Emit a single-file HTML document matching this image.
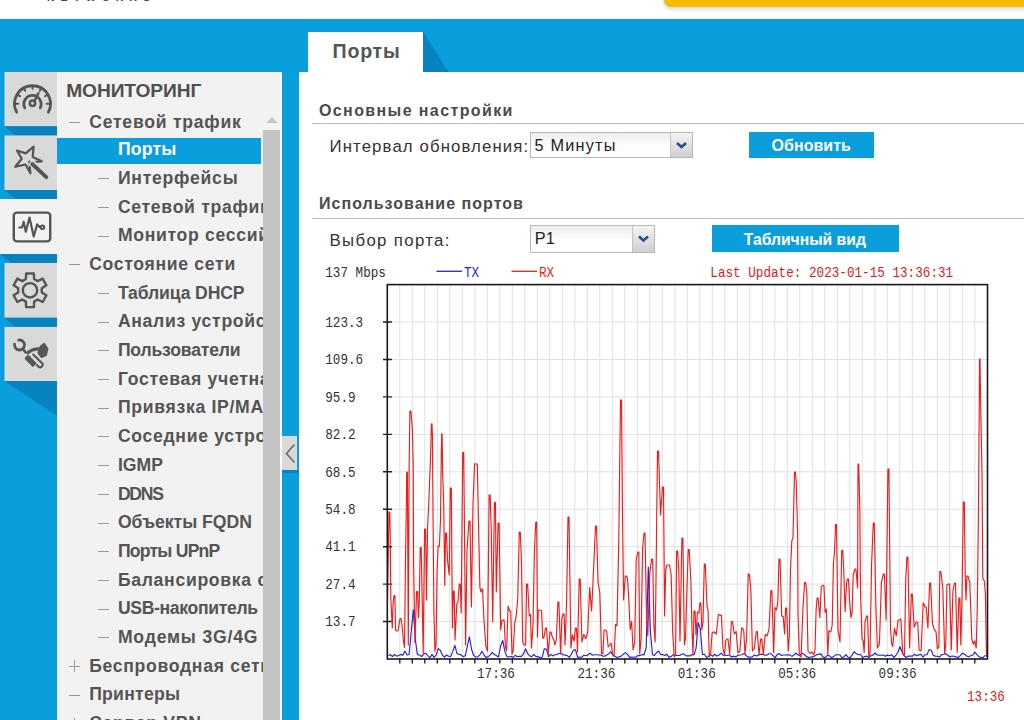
<!DOCTYPE html>
<html><head><meta charset="utf-8">
<style>
html,body{margin:0;padding:0;}
body{width:1024px;height:720px;overflow:hidden;position:relative;background:#0a9edc;font-family:"Liberation Sans",sans-serif;}
.abs{position:absolute;}
.t{position:absolute;white-space:nowrap;}
.sel{position:absolute;border:1px solid #b8b8b8;background:linear-gradient(#ececec,#fff 55%);box-sizing:border-box;}
.selbtn{position:absolute;top:0;right:0;width:21px;height:24px;background:linear-gradient(#f4f4f4,#cfcfcf);border-left:1px solid #c4c4c4;}
.selbtn svg{display:block}
.btn{position:absolute;background:#0a9edc;}

</style></head><body>
<div class="abs" style="left:0;top:0;width:1024px;height:19px;background:#fff"></div>
<div class="abs" style="left:47px;top:-7.8px;font-size:10.5px;line-height:11px;letter-spacing:5.95px;color:#444;font-weight:bold">NETWORKS</div>
<div class="abs" style="left:664px;top:-20px;width:380px;height:27px;background:#f5bd00;border-radius:7px;box-shadow:0 2px 4px rgba(0,0,0,0.18)"></div>
<svg class="abs" style="left:0;top:0" width="60" height="440" viewBox="0 0 60 440">
 <!-- square 1 -->
 <rect x="4.5" y="72" width="52.5" height="54.3" fill="#d9d9d9"/>
 <polygon points="4.5,126.3 57,126.3 57,135 15,135" fill="#0682bf"/>
 <!-- square 2 -->
 <rect x="4.5" y="135.5" width="52.5" height="54.5" fill="#d9d9d9"/>
 <polygon points="4.5,190 57,190 57,199 15.5,199" fill="#0682bf"/>
 <!-- active -->
 <rect x="0" y="199" width="57" height="55" fill="#f2f2f2"/>
 <polygon points="0,254 57,254 57,262.8 11,262.8" fill="#0682bf"/>
 <!-- square 4 -->
 <rect x="4.5" y="263" width="52.5" height="54.8" fill="#d9d9d9"/>
 <polygon points="4.5,317.8 57,317.8 57,326.6 15,326.6" fill="#0682bf"/>
 <!-- square 5 -->
 <rect x="4.5" y="327" width="52.5" height="54" fill="#d9d9d9"/>
 <polygon points="4.5,381 57,381 57,416" fill="#0682bf"/>
 <g fill="none" stroke="#555" stroke-width="2.5" stroke-linecap="round" stroke-linejoin="round">
  <!-- speedometer -->
  <path d="M16.6 112.2 A18 18 0 1 1 48.4 112.2" stroke-width="2.8"/>
  <path d="M16 103.8 L18.3 103.8 M17.9 95 L19.9 96.2 M24 88.8 L25.2 90.8 M32.5 86.5 L32.5 88.8 M41 88.8 L39.8 90.8 M47.1 95 L45.1 96.2 M49 103.8 L46.7 103.8" stroke-width="2"/>
  <path d="M24.8 107.8 A8.6 8.6 0 1 1 40.2 107.8" stroke-width="2.8"/>
  <circle cx="32.5" cy="103.3" r="2.7"/>
  <path d="M34.6 100.6 L38.4 93.2"/>
  <!-- magic wand star -->
  <path stroke-width="2.2" d="M29.4 161.6 L30.4 173.3 L25.5 164.5 L15.25 166.8 L21.7 158.7 L17 150.5 L25.75 153.4 L33.6 146.7 L32.75 156.9 L41.8 161.3 L34 162"/>
  <!-- monitor -->
  <rect x="13.8" y="212.6" width="36.4" height="28.8" rx="3" stroke-width="2.4"/>
  <path d="M19.2 227.5 L22.1 227.3 L23.7 221.7 L25.8 231.7 L29.5 217.5 L33.7 236.5 L37.2 224.4 L39.6 227" stroke-width="2.2"/>
  <circle cx="42.5" cy="227.3" r="1.8" stroke-width="2"/>
  <!-- gear -->
  <path d="M25.9 279.0 L26.1 273.5 L33.9 273.5 L34.1 279.0 L37.7 281.1 L42.6 278.6 L46.4 285.3 L41.8 288.2 L41.8 292.4 L46.4 295.3 L42.6 302.0 L37.7 299.5 L34.1 301.6 L33.9 307.1 L26.1 307.1 L25.9 301.6 L22.3 299.5 L17.4 302.0 L13.6 295.3 L18.2 292.4 L18.2 288.2 L13.6 285.3 L17.4 278.6 L22.3 281.1Z" stroke-width="2.4"/>
  <circle cx="30" cy="290.3" r="7.2" stroke-width="2.4"/>
  <!-- tools: wrench -->
  <path d="M14.6 344.1 A5 5 0 1 0 18.6 340.1" stroke-width="2.8"/>
  <path d="M23.6 349.8 L25.8 352.5" stroke-width="2.6"/>
  <path d="M33.2 354.6 L42.2 363.2 A2.6 2.6 0 0 1 38.6 366.8 L36.8 365" stroke-width="2.1"/>
 </g>
 <g fill="#555" stroke="#555" stroke-linejoin="round" stroke-linecap="round">
  <path d="M30.5 161.8 L46.5 177.3" stroke-width="7" fill="none" stroke="#d9d9d9" stroke-linecap="butt"/>
  <path d="M32.2 164 L46.3 177.2" stroke-width="3.8" fill="none"/>
  <!-- screwdriver blob + shaft + grip -->
  <path d="M40.5 346.5 L44.2 343.6 L47.6 348.6 L46.2 355 L41.5 357.2 L38.2 353 Z" stroke-width="1.6"/>
  <path d="M27.8 352.8 Q33 348.5 40.5 349" stroke-width="3.2" fill="none"/>
  <path d="M25.8 358.4 L28.2 356 L35.2 363.2 L32.8 365.6 Z" stroke-width="2.2"/>
 </g>
</svg>

<div class="abs" style="left:57px;top:72px;width:223px;height:648px;background:#f2f2f2"></div>
<div class="abs" style="left:57px;top:72px;width:205.7px;height:648px;overflow:hidden">
<div class="t" style="left:9.20px;top:8.12px;font-size:19.2px;line-height:21.45px;font-weight:bold;color:#505050;letter-spacing:-0.1px;">МОНИТОРИНГ</div>
<div class="abs" style="left:11.75px;top:50px;width:11.5px;height:1px;background:#999999"></div>
<div class="t" style="left:32.20px;top:41.07px;font-size:17.6px;line-height:19.66px;font-weight:bold;color:#545454;letter-spacing:0.758px;">Сетевой трафик</div>
<div class="abs" style="left:0;top:66px;width:203.7px;height:25.8px;background:#0a9edc"></div>
<div class="abs" style="left:40.50px;top:78px;width:11.5px;height:1px;background:#3d8fb8"></div>
<div class="t" style="left:60.90px;top:68.35px;font-size:17.6px;line-height:19.66px;font-weight:bold;color:#fff;letter-spacing:0.2px;">Порты</div>
<div class="abs" style="left:40.50px;top:106px;width:11.5px;height:1px;background:#999999"></div>
<div class="t" style="left:60.90px;top:97.03px;font-size:17.6px;line-height:19.66px;font-weight:bold;color:#545454;letter-spacing:0.756px;">Интерфейсы</div>
<div class="abs" style="left:40.50px;top:135px;width:11.5px;height:1px;background:#999999"></div>
<div class="t" style="left:60.90px;top:125.71px;font-size:17.6px;line-height:19.66px;font-weight:bold;color:#545454;letter-spacing:0.7px;">Сетевой трафик по хостам</div>
<div class="abs" style="left:40.50px;top:164px;width:11.5px;height:1px;background:#999999"></div>
<div class="t" style="left:60.90px;top:154.39px;font-size:17.6px;line-height:19.66px;font-weight:bold;color:#545454;letter-spacing:0.7px;">Монитор сессий</div>
<div class="abs" style="left:11.75px;top:192px;width:11.5px;height:1px;background:#999999"></div>
<div class="t" style="left:32.20px;top:183.07px;font-size:17.6px;line-height:19.66px;font-weight:bold;color:#545454;letter-spacing:0.689px;">Состояние сети</div>
<div class="abs" style="left:40.50px;top:221px;width:11.5px;height:1px;background:#999999"></div>
<div class="t" style="left:60.90px;top:211.75px;font-size:17.6px;line-height:19.66px;font-weight:bold;color:#545454;letter-spacing:-0.123px;">Таблица DHCP</div>
<div class="abs" style="left:40.50px;top:250px;width:11.5px;height:1px;background:#999999"></div>
<div class="t" style="left:60.90px;top:240.43px;font-size:17.6px;line-height:19.66px;font-weight:bold;color:#545454;letter-spacing:0.7px;">Анализ устройств</div>
<div class="abs" style="left:40.50px;top:278px;width:11.5px;height:1px;background:#999999"></div>
<div class="t" style="left:60.90px;top:269.11px;font-size:17.6px;line-height:19.66px;font-weight:bold;color:#545454;letter-spacing:-0.186px;">Пользователи</div>
<div class="abs" style="left:40.50px;top:307px;width:11.5px;height:1px;background:#999999"></div>
<div class="t" style="left:60.90px;top:297.79px;font-size:17.6px;line-height:19.66px;font-weight:bold;color:#545454;letter-spacing:0.7px;">Гостевая учетная запись</div>
<div class="abs" style="left:40.50px;top:336px;width:11.5px;height:1px;background:#999999"></div>
<div class="t" style="left:60.90px;top:326.47px;font-size:17.6px;line-height:19.66px;font-weight:bold;color:#545454;letter-spacing:0.7px;">Привязка IP/MAC</div>
<div class="abs" style="left:40.50px;top:364px;width:11.5px;height:1px;background:#999999"></div>
<div class="t" style="left:60.90px;top:355.15px;font-size:17.6px;line-height:19.66px;font-weight:bold;color:#545454;letter-spacing:0.7px;">Соседние устройства</div>
<div class="abs" style="left:40.50px;top:393px;width:11.5px;height:1px;background:#999999"></div>
<div class="t" style="left:60.90px;top:383.83px;font-size:17.6px;line-height:19.66px;font-weight:bold;color:#545454;letter-spacing:0.017px;">IGMP</div>
<div class="abs" style="left:40.50px;top:422px;width:11.5px;height:1px;background:#999999"></div>
<div class="t" style="left:60.90px;top:412.51px;font-size:17.6px;line-height:19.66px;font-weight:bold;color:#545454;letter-spacing:-1.283px;">DDNS</div>
<div class="abs" style="left:40.50px;top:451px;width:11.5px;height:1px;background:#999999"></div>
<div class="t" style="left:60.90px;top:441.19px;font-size:17.6px;line-height:19.66px;font-weight:bold;color:#545454;letter-spacing:-0.014px;">Объекты FQDN</div>
<div class="abs" style="left:40.50px;top:479px;width:11.5px;height:1px;background:#999999"></div>
<div class="t" style="left:60.90px;top:469.87px;font-size:17.6px;line-height:19.66px;font-weight:bold;color:#545454;letter-spacing:-0.772px;">Порты UPnP</div>
<div class="abs" style="left:40.50px;top:508px;width:11.5px;height:1px;background:#999999"></div>
<div class="t" style="left:60.90px;top:498.55px;font-size:17.6px;line-height:19.66px;font-weight:bold;color:#545454;letter-spacing:0.7px;">Балансировка сети</div>
<div class="abs" style="left:40.50px;top:537px;width:11.5px;height:1px;background:#999999"></div>
<div class="t" style="left:60.90px;top:527.23px;font-size:17.6px;line-height:19.66px;font-weight:bold;color:#545454;letter-spacing:-0.334px;">USB-накопитель</div>
<div class="abs" style="left:40.50px;top:565px;width:11.5px;height:1px;background:#999999"></div>
<div class="t" style="left:60.90px;top:555.91px;font-size:17.6px;line-height:19.66px;font-weight:bold;color:#545454;letter-spacing:0.814px;">Модемы 3G/4G</div>
<div class="abs" style="left:11.75px;top:594px;width:11.5px;height:1px;background:#999999"></div>
<div class="abs" style="left:17px;top:588.22px;width:1px;height:11.5px;background:#999999"></div>
<div class="t" style="left:32.20px;top:584.59px;font-size:17.6px;line-height:19.66px;font-weight:bold;color:#545454;letter-spacing:0.7px;">Беспроводная сеть</div>
<div class="abs" style="left:11.75px;top:623px;width:11.5px;height:1px;background:#999999"></div>
<div class="t" style="left:32.20px;top:613.27px;font-size:17.6px;line-height:19.66px;font-weight:bold;color:#545454;letter-spacing:0.265px;">Принтеры</div>
<div class="abs" style="left:11.75px;top:651px;width:11.5px;height:1px;background:#999999"></div>
<div class="abs" style="left:17px;top:645.58px;width:1px;height:11.5px;background:#999999"></div>
<div class="t" style="left:32.20px;top:641.95px;font-size:17.6px;line-height:19.66px;font-weight:bold;color:#545454;letter-spacing:0.7px;">Сервер VPN</div>

</div>
<div class="abs" style="left:262.7px;top:130px;width:17.3px;height:590px;background:#c3c3c3"></div>
<div class="abs" style="left:265.5px;top:116.5px;width:0;height:0;border-left:6px solid transparent;border-right:6px solid transparent;border-bottom:6.5px solid #c6c6c6"></div>
<div class="abs" style="left:280px;top:72px;width:2px;height:648px;background:#f4fbfe"></div>
<div class="abs" style="left:282px;top:436.3px;width:14.5px;height:34px;background:#d9d9d9"></div>
<svg class="abs" style="left:282px;top:436px" width="15" height="35"><path d="M12.5 8.5 L4.5 17.5 L12.5 26.5" fill="none" stroke="#6a6a6a" stroke-width="1.6"/></svg>
<div class="abs" style="left:282px;top:470.3px;width:16.7px;height:3px;background:#0682bf"></div>
<div class="abs" style="left:298.7px;top:72px;width:726px;height:648px;background:#fff"></div>
<div class="abs" style="left:308px;top:31.7px;width:115px;height:41px;background:#fff"></div>
<div class="abs" style="left:423px;top:31.7px;width:25.5px;height:40.3px;background:#0682bf;clip-path:polygon(0 0,0 100%,100% 100%)"></div>
<div class="t" style="left:332.60px;top:41.06px;font-size:19.6px;line-height:21.89px;font-weight:bold;color:#555555;letter-spacing:0.75px;">Порты</div>
<div class="t" style="left:319.00px;top:102.12px;font-size:16px;line-height:17.87px;font-weight:bold;color:#4a4a4a;letter-spacing:1.39px;">Основные настройки</div>
<div class="abs" style="left:312px;top:123.3px;width:712px;height:1.2px;background:#bcbcbc"></div>
<div class="t" style="left:329.50px;top:138.30px;font-size:16.8px;line-height:18.77px;font-weight:normal;color:#333;letter-spacing:1.11px;">Интервал обновления:</div>
<div class="sel" style="left:530px;top:132.4px;width:163px;height:26px"><div class="selbtn"><svg width="21" height="24" viewBox="0 0 21 24"><path d="M6 10 L10.5 14 L15 10" fill="none" stroke="#2b4c86" stroke-width="2.6"/></svg></div></div>
<div class="t" style="left:534.50px;top:136.25px;font-size:16.3px;line-height:18.21px;font-weight:normal;color:#222;letter-spacing:1.2px;">5 Минуты</div>
<div class="btn" style="left:749px;top:132.2px;width:124.7px;height:26.3px"></div>
<div class="t" style="left:771.50px;top:136.52px;font-size:16px;line-height:17.87px;font-weight:bold;color:#fff;letter-spacing:0.05px;">Обновить</div>
<div class="t" style="left:319.00px;top:195.12px;font-size:16px;line-height:17.87px;font-weight:bold;color:#4a4a4a;letter-spacing:1.03px;">Использование портов</div>
<div class="abs" style="left:312px;top:217.6px;width:712px;height:1.2px;background:#bcbcbc"></div>
<div class="t" style="left:329.50px;top:231.50px;font-size:16.8px;line-height:18.77px;font-weight:normal;color:#333;letter-spacing:1.35px;">Выбор порта:</div>
<div class="sel" style="left:530px;top:225.2px;width:124.5px;height:27.4px"><div class="selbtn" style="height:25.4px"><svg width="21" height="25" viewBox="0 0 21 25"><path d="M6 10.5 L10.5 14.5 L15 10.5" fill="none" stroke="#2b4c86" stroke-width="2.6"/></svg></div></div>
<div class="t" style="left:534.80px;top:228.75px;font-size:16.3px;line-height:18.21px;font-weight:normal;color:#222;letter-spacing:0.0px;">P1</div>
<div class="btn" style="left:711.7px;top:225.2px;width:187.5px;height:27px"></div>
<div class="t" style="left:743.80px;top:230.69px;font-size:15.7px;line-height:17.54px;font-weight:bold;color:#fff;letter-spacing:0px;">Табличный вид</div>

<svg class="abs" style="left:0;top:0" width="1024" height="720" viewBox="0 0 1024 720">
<path d="M399.8 284.6V659.0M412.3 284.6V659.0M424.8 284.6V659.0M437.3 284.6V659.0M449.8 284.6V659.0M462.3 284.6V659.0M474.8 284.6V659.0M487.3 284.6V659.0M499.8 284.6V659.0M512.3 284.6V659.0M524.8 284.6V659.0M537.3 284.6V659.0M549.8 284.6V659.0M562.3 284.6V659.0M574.8 284.6V659.0M587.3 284.6V659.0M599.8 284.6V659.0M612.3 284.6V659.0M624.8 284.6V659.0M637.3 284.6V659.0M649.8 284.6V659.0M662.3 284.6V659.0M674.8 284.6V659.0M687.3 284.6V659.0M699.8 284.6V659.0M712.3 284.6V659.0M724.8 284.6V659.0M737.3 284.6V659.0M749.8 284.6V659.0M762.3 284.6V659.0M774.8 284.6V659.0M787.3 284.6V659.0M799.8 284.6V659.0M812.3 284.6V659.0M824.8 284.6V659.0M837.3 284.6V659.0M849.8 284.6V659.0M862.3 284.6V659.0M874.8 284.6V659.0M887.3 284.6V659.0M899.8 284.6V659.0M912.3 284.6V659.0M924.8 284.6V659.0M937.3 284.6V659.0M949.8 284.6V659.0M962.3 284.6V659.0M974.8 284.6V659.0M387.3 322.04H987.5M387.3 359.48H987.5M387.3 396.92H987.5M387.3 434.36H987.5M387.3 471.80H987.5M387.3 509.24H987.5M387.3 546.68H987.5M387.3 584.12H987.5M387.3 621.56H987.5" stroke="#e0e0e0" stroke-width="1" fill="none"/>
<path d="M383 322.04H392M383 359.48H392M383 396.92H392M383 434.36H392M383 471.80H392M383 509.24H392M383 546.68H392M383 584.12H392M383 621.56H392M399.8 659.0V663.5M412.3 659.0V663.5M424.8 659.0V663.5M437.3 659.0V663.5M449.8 659.0V663.5M462.3 659.0V663.5M474.8 659.0V663.5M487.3 659.0V663.5M499.8 659.0V663.5M512.3 659.0V663.5M524.8 659.0V663.5M537.3 659.0V663.5M549.8 659.0V663.5M562.3 659.0V663.5M574.8 659.0V663.5M587.3 659.0V663.5M599.8 659.0V663.5M612.3 659.0V663.5M624.8 659.0V663.5M637.3 659.0V663.5M649.8 659.0V663.5M662.3 659.0V663.5M674.8 659.0V663.5M687.3 659.0V663.5M699.8 659.0V663.5M712.3 659.0V663.5M724.8 659.0V663.5M737.3 659.0V663.5M749.8 659.0V663.5M762.3 659.0V663.5M774.8 659.0V663.5M787.3 659.0V663.5M799.8 659.0V663.5M812.3 659.0V663.5M824.8 659.0V663.5M837.3 659.0V663.5M849.8 659.0V663.5M862.3 659.0V663.5M874.8 659.0V663.5M887.3 659.0V663.5M899.8 659.0V663.5M912.3 659.0V663.5M924.8 659.0V663.5M937.3 659.0V663.5M949.8 659.0V663.5M962.3 659.0V663.5M974.8 659.0V663.5" stroke="#222" stroke-width="1.4" fill="none"/>
<polyline points="388.3,655.4 390.4,654.7 392.5,656.5 394.5,654.5 396.6,656.1 398.7,655.5 400.8,654.4 402.9,655.3 404.9,651.1 407.0,655.0 409.1,654.5 411.2,632.0 413.3,609.7 415.3,639.4 417.4,654.6 419.5,655.0 421.6,656.5 423.7,654.1 425.7,653.2 427.8,655.6 429.9,657.7 432.0,654.4 434.1,657.3 436.1,655.2 438.2,648.6 440.3,650.3 442.4,655.3 444.5,657.1 446.5,654.9 448.6,656.3 450.7,656.5 452.8,651.4 454.9,645.4 456.9,653.4 459.0,654.4 461.1,654.9 463.2,656.6 465.3,655.7 467.3,646.4 469.4,636.9 471.5,649.0 473.6,655.3 475.7,657.1 477.7,656.7 479.8,655.1 481.9,651.2 484.0,655.0 486.1,657.4 488.1,656.8 490.2,654.8 492.3,652.5 494.4,654.6 496.5,655.7 498.5,656.9 500.6,646.0 502.7,640.4 504.8,651.2 506.9,656.6 508.9,657.0 511.0,656.3 513.1,657.4 515.2,655.3 517.3,656.7 519.3,656.3 521.4,656.3 523.5,653.8 525.6,648.8 527.7,653.7 529.7,655.9 531.8,656.6 533.9,654.4 536.0,656.7 538.1,656.5 540.1,657.8 542.2,657.2 544.3,648.7 546.4,649.0 548.5,656.6 550.5,654.3 552.6,655.9 554.7,654.8 556.8,654.6 558.9,653.5 560.9,653.3 563.0,654.7 565.1,655.1 567.2,655.6 569.3,657.3 571.3,654.5 573.4,650.0 575.5,649.7 577.6,657.4 579.7,657.1 581.7,657.3 583.8,655.2 585.9,655.7 588.0,655.0 590.1,653.1 592.1,655.1 594.2,654.7 596.3,654.8 598.4,655.0 600.5,655.0 602.5,655.9 604.6,656.3 606.7,655.1 608.8,653.7 610.9,651.8 612.9,655.2 615.0,656.2 617.1,657.6 619.2,656.7 621.3,656.1 623.3,654.2 625.4,652.6 627.5,654.4 629.6,657.4 631.7,657.0 633.7,657.3 635.8,657.1 637.9,655.6 640.0,655.6 642.1,654.6 644.1,654.9 646.2,647.5 648.3,567.0 650.4,632.0 652.5,654.8 654.5,655.4 656.6,652.5 658.7,651.1 660.8,654.7 662.9,654.6 664.9,655.5 667.0,654.3 669.1,657.3 671.2,656.4 673.3,654.7 675.3,655.1 677.4,655.5 679.5,655.5 681.6,654.4 683.7,653.7 685.7,655.7 687.8,655.9 689.9,655.9 692.0,654.5 694.1,654.6 696.1,648.1 698.2,622.6 700.3,629.0 702.4,654.5 704.5,654.3 706.5,657.6 708.6,656.1 710.7,654.7 712.8,656.2 714.9,654.3 716.9,656.1 719.0,654.9 721.1,653.2 723.2,655.3 725.3,655.1 727.3,655.5 729.4,654.8 731.5,657.0 733.6,656.1 735.7,657.0 737.7,655.4 739.8,655.0 741.9,654.7 744.0,653.4 746.1,655.5 748.1,657.1 750.2,657.1 752.3,656.9 754.4,655.0 756.5,656.1 758.5,655.0 760.6,654.3 762.7,654.3 764.8,655.2 766.9,655.1 768.9,653.7 771.0,653.7 773.1,655.8 775.2,657.6 777.3,654.4 779.3,653.6 781.4,655.5 783.5,655.0 785.6,655.0 787.7,654.9 789.7,654.9 791.8,656.4 793.9,655.1 796.0,653.0 798.1,655.1 800.1,654.9 802.2,653.2 804.3,654.5 806.4,656.6 808.5,657.5 810.5,657.0 812.6,656.9 814.7,655.9 816.8,654.8 818.9,654.1 820.9,653.9 823.0,657.1 825.1,657.7 827.2,655.6 829.3,655.6 831.3,657.6 833.4,656.8 835.5,654.8 837.6,654.7 839.7,654.7 841.7,657.5 843.8,657.1 845.9,654.7 848.0,657.2 850.1,657.7 852.1,655.1 854.2,651.6 856.3,653.8 858.4,654.7 860.5,654.3 862.5,657.7 864.6,656.5 866.7,656.1 868.8,657.6 870.9,655.8 872.9,655.1 875.0,653.0 877.1,655.0 879.2,655.1 881.3,655.3 883.3,655.1 885.4,656.3 887.5,655.1 889.6,655.7 891.7,654.7 893.7,657.5 895.8,655.5 897.9,652.2 900.0,646.7 902.1,652.1 904.1,655.7 906.2,657.5 908.3,656.0 910.4,656.1 912.5,656.1 914.5,654.3 916.6,655.8 918.7,654.9 920.8,654.2 922.9,657.1 924.9,654.8 927.0,654.7 929.1,649.6 931.2,650.3 933.3,655.4 935.3,656.1 937.4,656.2 939.5,657.0 941.6,654.6 943.7,654.3 945.7,653.7 947.8,655.2 949.9,657.0 952.0,656.0 954.1,656.2 956.1,656.9 958.2,657.5 960.3,655.6 962.4,653.2 964.5,654.2 966.5,656.0 968.6,656.7 970.7,655.8 972.8,655.0 974.9,652.2 976.9,654.6 979.0,656.7 981.1,657.4 983.2,657.6 985.3,655.1" fill="none" stroke="#2222e8" stroke-width="1.15" stroke-linejoin="round"/>
<polyline points="387.5,600.0 389.0,512.0 389.8,512.0 390.3,541.0 390.8,599.0 392.3,628.0 393.0,605.0 394.0,595.5 394.9,595.5 395.5,630.0 396.8,631.0 398.0,631.0 400.0,618.5 401.0,618.5 402.0,625.0 403.5,642.0 404.5,647.5 405.5,559.0 406.2,516.5 406.7,472.0 407.4,472.0 408.3,645.0 409.1,470.0 409.9,411.0 410.9,411.0 412.4,429.0 413.2,463.9 413.6,563.0 414.9,642.5 416.6,591.5 417.6,591.5 418.5,617.7 419.3,600.0 420.2,547.5 421.2,547.5 423.2,654.0 424.6,529.0 425.6,529.0 426.5,600.0 427.6,526.5 428.8,503.0 430.6,455.6 431.4,423.9 432.0,423.9 432.4,435.6 433.0,511.0 433.9,610.4 434.9,651.3 436.0,645.4 437.1,570.7 438.2,546.0 439.4,546.1 440.5,520.0 441.3,453.3 441.7,433.9 442.1,433.9 442.6,472.0 443.7,503.8 444.8,585.6 445.6,533.0 446.5,533.0 447.5,560.0 449.2,575.0 450.3,488.0 451.3,488.0 452.4,628.0 453.3,591.0 454.2,591.0 455.0,640.0 456.8,604.0 458.0,601.5 459.2,584.0 460.2,584.0 461.2,613.0 462.7,452.5 463.7,452.5 465.6,645.0 467.0,550.0 469.0,521.0 470.0,521.0 471.4,607.0 473.0,504.0 474.6,463.8 476.3,464.0 477.3,464.0 478.7,533.0 479.9,587.5 481.0,592.0 482.5,588.7 484.0,620.0 485.8,646.0 487.5,651.0 489.1,495.0 490.1,495.0 491.2,528.0 492.7,622.0 494.4,502.6 495.4,502.6 496.3,592.0 498.1,523.0 499.1,523.0 500.7,630.0 501.9,620.8 503.1,620.0 504.1,620.0 505.4,645.9 506.6,651.0 508.1,606.0 509.7,611.0 510.7,611.0 512.0,654.1 513.2,651.0 514.7,623.2 516.1,617.0 517.7,599.5 519.3,532.0 520.3,532.0 521.5,562.0 522.7,642.0 524.2,645.2 525.6,645.0 526.6,584.0 527.6,584.0 529.3,616.0 530.4,614.5 531.5,648.0 533.0,624.5 534.4,551.0 535.8,522.0 536.7,522.0 537.5,637.0 538.3,610.0 539.2,610.0 540.4,610.2 541.6,611.0 542.7,638.3 543.8,638.0 545.5,628.0 546.5,628.0 548.2,654.0 549.9,632.0 550.9,632.0 552.6,638.0 553.7,639.2 554.8,645.0 556.3,639.7 557.9,602.0 558.9,602.0 560.6,654.0 561.9,618.1 563.1,614.0 564.1,614.0 565.0,645.0 566.5,606.0 568.0,517.0 569.0,517.0 570.9,648.0 572.4,634.9 574.0,641.0 575.5,628.0 576.5,628.0 577.5,652.0 579.2,579.0 580.2,579.0 581.9,642.0 583.8,634.4 585.8,638.7 587.7,632.0 589.7,587.6 591.6,611.0 593.6,569.0 595.5,526.0 596.5,526.0 598.0,582.0 599.8,593.0 601.6,654.0 602.9,653.6 604.1,630.0 605.1,630.0 606.6,630.9 608.2,647.0 609.7,645.0 611.2,643.2 612.6,654.0 614.1,656.5 615.5,624.4 617.0,626.0 618.8,538.0 620.5,400.0 621.5,400.0 622.5,514.0 623.6,600.0 625.3,576.0 626.3,576.0 627.5,578.4 628.7,598.0 630.2,629.7 631.6,621.3 633.1,650.0 634.7,642.3 636.2,559.7 637.8,552.0 638.8,552.0 639.7,654.0 641.1,638.7 642.6,548.3 644.0,533.0 645.0,533.0 646.4,609.5 647.8,636.0 649.8,572.5 651.7,559.0 652.7,559.0 653.9,625.4 655.1,642.0 655.8,596.0 657.5,451.0 658.5,451.0 660.5,515.0 662.5,487.0 663.5,487.0 664.6,616.0 665.7,570.9 666.8,565.0 668.1,565.0 669.5,565.0 671.1,574.0 672.7,633.0 674.2,657.0 675.6,654.0 676.6,551.0 677.6,551.0 678.8,571.0 680.0,641.0 681.9,538.0 682.9,538.0 684.4,645.0 685.5,637.8 686.5,603.0 688.2,549.5 689.2,549.5 690.9,582.0 692.0,630.0 693.0,655.0 694.0,611.0 695.0,611.0 696.0,635.0 697.5,611.9 698.9,613.0 699.9,603.0 700.9,603.0 701.8,630.0 703.0,622.0 704.3,564.0 705.3,564.0 707.0,606.0 708.1,610.7 709.2,657.0 710.7,653.0 712.1,633.0 713.2,632.1 714.3,632.0 716.3,634.1 718.4,614.3 720.4,615.4 721.4,615.4 723.0,648.9 724.5,655.0 725.8,640.6 727.0,639.0 728.0,639.0 729.7,654.0 731.4,621.5 732.4,621.5 734.3,633.9 736.1,631.5 738.0,652.8 739.9,651.0 741.6,628.0 742.6,628.0 743.8,631.4 745.0,654.0 746.6,639.0 748.2,574.0 749.2,574.0 750.8,587.5 752.4,651.0 754.3,648.6 756.3,631.5 757.3,631.5 759.0,655.0 760.7,639.0 761.7,639.0 763.4,654.0 765.2,634.3 767.0,636.0 769.0,629.3 770.9,590.5 771.9,590.5 773.6,652.5 775.0,607.6 776.5,610.0 777.8,602.2 779.0,559.0 780.0,559.0 781.7,616.0 783.2,616.6 784.6,634.0 785.6,608.0 786.6,608.0 788.3,651.0 789.4,635.0 790.5,569.0 791.8,540.9 793.0,538.0 794.5,472.0 795.4,472.0 796.2,482.0 797.6,532.0 798.0,614.0 799.3,655.0 801.1,657.0 802.9,609.0 804.6,582.5 805.6,582.5 806.8,591.8 808.0,651.0 810.0,653.5 811.9,651.9 813.9,655.0 815.0,649.8 816.1,610.0 817.1,598.0 818.1,598.0 819.8,617.5 821.3,586.8 822.9,585.4 823.9,585.4 825.1,612.3 826.3,609.0 827.8,655.0 828.9,630.7 830.0,632.0 831.1,630.9 832.2,625.0 833.4,564.0 834.5,553.0 835.5,524.5 836.5,524.5 838.0,630.0 840.0,642.0 841.7,550.3 842.7,550.3 843.7,569.0 845.1,611.5 846.6,582.5 847.5,579.0 848.5,579.0 849.5,600.0 851.0,617.5 852.1,612.6 853.2,575.0 854.9,569.0 855.9,569.0 857.6,588.0 858.0,464.0 858.7,464.0 859.8,508.6 860.5,592.7 862.0,639.0 863.1,640.3 864.2,652.5 865.0,622.0 866.6,616.0 867.6,616.0 868.8,657.0 870.0,654.0 871.6,563.5 873.3,523.0 874.3,523.0 875.9,607.0 877.4,648.0 879.4,644.0 881.4,582.4 883.4,574.0 884.4,574.0 886.1,620.0 887.9,469.0 888.9,469.0 890.5,628.0 891.6,643.6 892.7,646.6 894.5,628.3 896.3,635.9 898.1,620.0 899.1,620.0 900.9,619.1 902.7,653.8 904.5,655.0 905.7,581.0 906.9,557.0 907.9,557.0 909.6,648.0 911.3,594.0 912.3,594.0 914.2,627.1 916.2,622.0 917.7,622.2 919.1,650.0 921.1,650.9 923.2,602.8 925.2,607.0 926.2,607.0 927.9,628.0 929.6,583.0 930.6,583.0 932.5,624.0 934.5,630.0 936.0,631.6 937.4,648.9 938.9,647.0 939.8,571.5 940.8,571.5 942.8,587.8 944.7,654.0 945.8,644.5 946.9,585.0 948.6,584.0 949.6,584.0 951.3,650.0 952.9,591.5 954.5,583.0 955.5,583.0 957.2,652.5 958.9,598.0 959.9,598.0 960.8,645.0 962.0,598.5 963.3,502.0 964.3,502.0 965.2,574.0 966.0,600.0 966.9,576.0 967.9,576.0 969.8,582.5 971.8,639.0 973.3,644.3 974.7,640.9 976.2,648.0 977.3,608.0 978.4,518.0 979.2,413.0 979.5,359.0 980.0,359.0 980.5,397.0 982.0,473.6 982.8,578.0 984.3,581.0 985.4,594.0 986.5,657.0" fill="none" stroke="#ee1c1c" stroke-width="1.15" stroke-linejoin="round"/>
<rect x="387.3" y="284.6" width="600.2" height="374.4" fill="none" stroke="#1a1a1a" stroke-width="1.6"/>
<text transform="translate(325.20,276.60) scale(1,1.2)" font-family="Liberation Mono" font-size="12.65" fill="#333">137 Mbps</text>
<text transform="translate(325.20,326.84) scale(1,1.2)" font-family="Liberation Mono" font-size="12.65" fill="#333">123.3</text>
<text transform="translate(325.20,364.28) scale(1,1.2)" font-family="Liberation Mono" font-size="12.65" fill="#333">109.6</text>
<text transform="translate(325.20,401.72) scale(1,1.2)" font-family="Liberation Mono" font-size="12.65" fill="#333">95.9</text>
<text transform="translate(325.20,439.16) scale(1,1.2)" font-family="Liberation Mono" font-size="12.65" fill="#333">82.2</text>
<text transform="translate(325.20,476.60) scale(1,1.2)" font-family="Liberation Mono" font-size="12.65" fill="#333">68.5</text>
<text transform="translate(325.20,514.04) scale(1,1.2)" font-family="Liberation Mono" font-size="12.65" fill="#333">54.8</text>
<text transform="translate(325.20,551.48) scale(1,1.2)" font-family="Liberation Mono" font-size="12.65" fill="#333">41.1</text>
<text transform="translate(325.20,588.92) scale(1,1.2)" font-family="Liberation Mono" font-size="12.65" fill="#333">27.4</text>
<text transform="translate(325.20,626.36) scale(1,1.2)" font-family="Liberation Mono" font-size="12.65" fill="#333">13.7</text>
<path d="M436.5 271.3H462" stroke-width="1.3" fill="none" stroke="#2222e8"/>
<path d="M511.6 271.3H537" stroke-width="1.3" fill="none" stroke="#ee1c1c"/>
<text transform="translate(464.00,276.60) scale(1,1.2)" font-family="Liberation Mono" font-size="12.65" fill="#2222e8">TX</text>
<text transform="translate(539.00,276.60) scale(1,1.2)" font-family="Liberation Mono" font-size="12.65" fill="#ee1c1c">RX</text>
<text transform="translate(710.30,276.60) scale(1,1.2)" font-family="Liberation Mono" font-size="12.65" fill="#e01a1a">Last Update: 2023-01-15 13:36:31</text>
<text transform="translate(477.00,678.20) scale(1,1.2)" font-family="Liberation Mono" font-size="12.65" fill="#333">17:36</text>
<text transform="translate(577.40,678.20) scale(1,1.2)" font-family="Liberation Mono" font-size="12.65" fill="#333">21:36</text>
<text transform="translate(677.80,678.20) scale(1,1.2)" font-family="Liberation Mono" font-size="12.65" fill="#333">01:36</text>
<text transform="translate(778.20,678.20) scale(1,1.2)" font-family="Liberation Mono" font-size="12.65" fill="#333">05:36</text>
<text transform="translate(878.60,678.20) scale(1,1.2)" font-family="Liberation Mono" font-size="12.65" fill="#333">09:36</text>
<text transform="translate(967.00,701.20) scale(1,1.2)" font-family="Liberation Mono" font-size="12.65" fill="#e01a1a">13:36</text>
</svg>
</body></html>
